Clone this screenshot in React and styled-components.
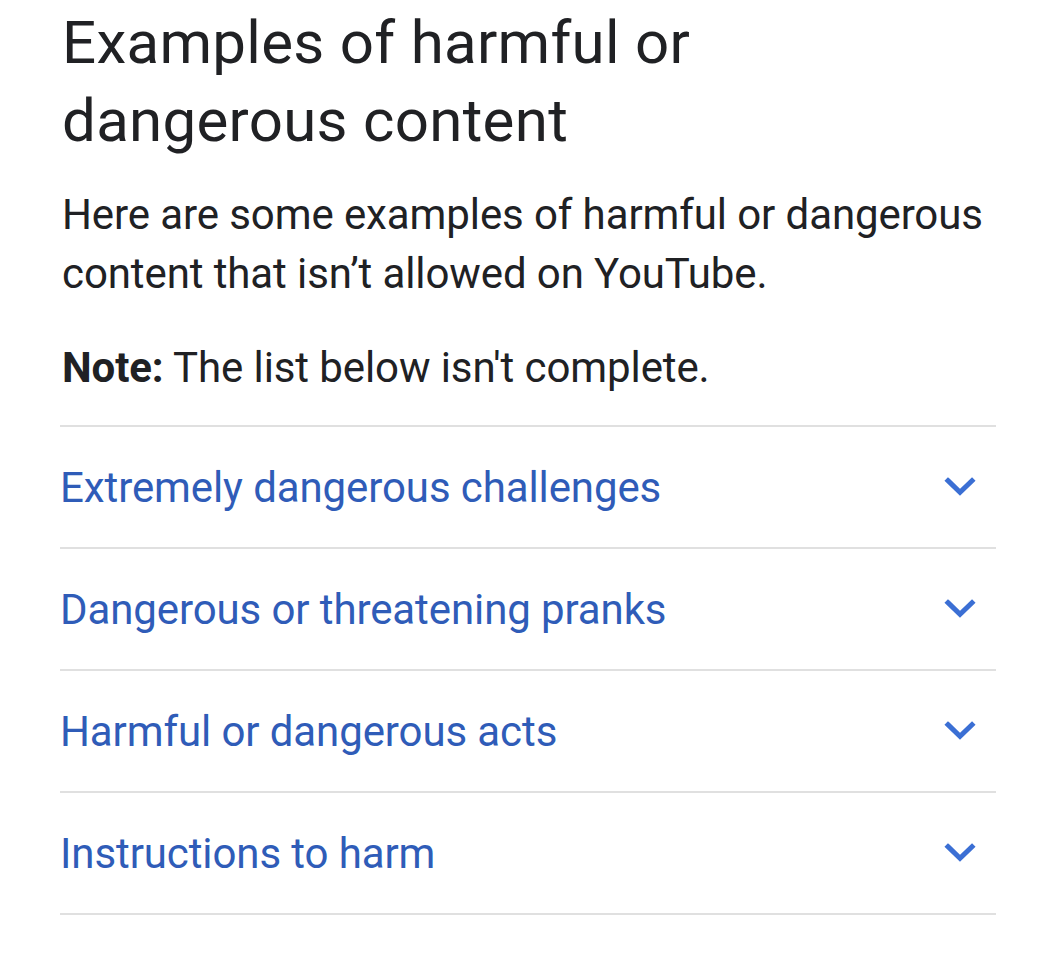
import styled, { createGlobalStyle } from "styled-components"

const GlobalStyle = createGlobalStyle`
  body {
    margin: 0;
    background: #ffffff;
    font-family: Roboto, "Liberation Sans", sans-serif;
  }
`

const items = [
  "Extremely dangerous challenges",
  "Dangerous or threatening pranks",
  "Harmful or dangerous acts",
  "Instructions to harm",
]

export default function App() {
  return (
    <>
      <GlobalStyle />
      <Page>
        <Title>Examples of harmful or dangerous content</Title>
        <Intro>Here are some examples of harmful or dangerous content that isn’t allowed on YouTube.</Intro>
        <Note>
          <strong>Note:</strong> The list below isn't complete.
        </Note>
        <List>
          {items.map((label) => (
            <Row key={label}>
              <RowLabel>{label}</RowLabel>
              <Chevron viewBox="0 0 24 24">
                <path d="M4.8 8.2 L12 15.2 L19.2 8.2" />
              </Chevron>
            </Row>
          ))}
        </List>
      </Page>
    </>
  )
}

const Page = styled.div`
  width: 936px;
  padding: 4px 0 0 60px;
  color: #202124;
`

const Title = styled.h1`
  margin: 0 0 0 2px;
  width: 700px;
  font-size: 60px;
  line-height: 78px;
  font-weight: 400;
  letter-spacing: 0.3px;
`

const Intro = styled.p`
  margin: 25px 0 0 2px;
  font-size: 42px;
  line-height: 59px;
  letter-spacing: -0.1px;
`

const Note = styled.p`
  margin: 35px 0 0 2px;
  font-size: 42px;
  line-height: 59px;
  letter-spacing: -0.1px;

  strong {
    font-weight: 700;
  }
`

const List = styled.div`
  margin-top: 28px;
  border-top: 2px solid #e0e0e0;
`

const Row = styled.div`
  display: flex;
  align-items: center;
  justify-content: space-between;
  height: 120px;
  border-bottom: 2px solid #e0e0e0;
`

const RowLabel = styled.span`
  font-size: 42px;
  color: #2f5cb8;
  letter-spacing: -0.1px;
`

const Chevron = styled.svg`
  width: 40px;
  height: 40px;
  margin-right: 16px;
  fill: none;
  stroke: #3b6fd4;
  stroke-width: 3;
  stroke-linecap: square;
`
